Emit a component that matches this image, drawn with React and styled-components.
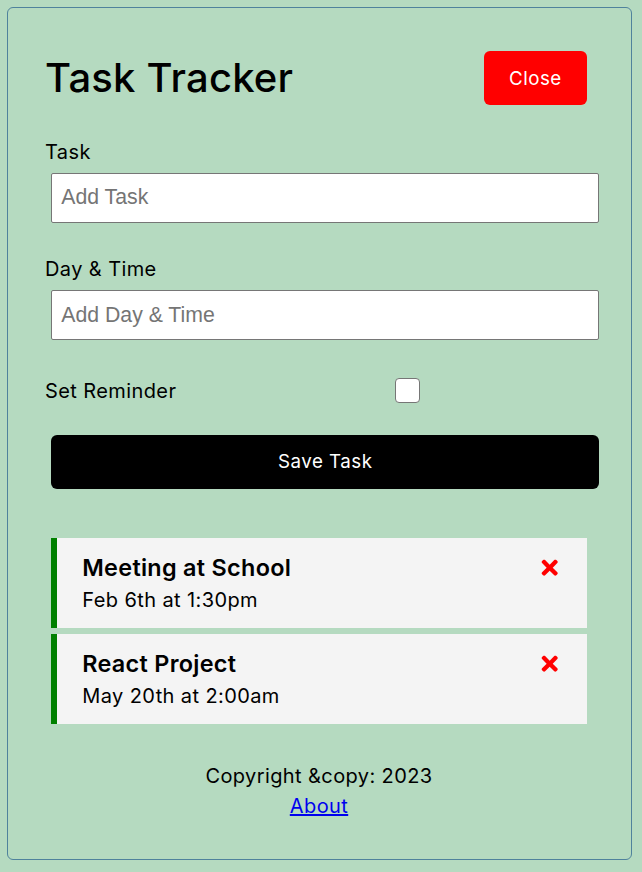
import React from 'react';
import styled, { createGlobalStyle } from 'styled-components';
import { FaTimes } from 'react-icons/fa';

const GlobalStyle = createGlobalStyle`
  * { box-sizing: border-box; margin: 0; padding: 0; }
  html, body { background: #b5dac0; }
  body {
    font-family: Inter, "Noto Sans", sans-serif;
    font-size: 20px;
    line-height: 30px;
    letter-spacing: 0.4px;
    color: #000;
  }
`;

const Container = styled.div`
  margin: 7px;
  width: 625px;
  border: 1px solid #4f829c;
  border-radius: 6px;
  padding: 37px 38px 38px 37px;
`;

const Header = styled.header`
  display: flex;
  justify-content: space-between;
  align-items: center;
  margin-bottom: 25px;
`;

const Title = styled.h1`
  font-size: 40px;
  line-height: 60px;
  font-weight: 500;
  letter-spacing: 0.2px;
`;

const Button = styled.button`
  display: ${(p) => (p.$block ? 'block' : 'inline-block')};
  width: ${(p) => (p.$block ? '100%' : 'auto')};
  background: ${(p) => p.$bg || '#000'};
  color: #fff;
  border: none;
  padding: 12.5px 25px;
  margin: 6.25px;
  border-radius: 6px;
  font-family: inherit;
  font-size: 18.75px;
  line-height: 29px;
  letter-spacing: 0.5px;
  cursor: pointer;
`;

const Form = styled.form`
  margin-bottom: 49px;
`;

const FormControl = styled.div`
  display: flow-root;
  margin: 25px 0;
`;

const CheckRow = styled.div`
  display: flex;
  align-items: center;
  justify-content: space-between;
  margin: 29px 0;
  min-height: 30px;
`;

const Label = styled.label`
  display: block;
  flex: 1;
`;

const Input = styled.input`
  display: block;
  width: 100%;
  height: 50px;
  margin: 6.25px;
  padding: 3.75px 9px;
  font-family: "Liberation Sans", Arial, sans-serif;
  font-size: 21.25px;
  letter-spacing: 0;
  border: 1px solid #767676;
  border-radius: 2px;
  background: #fff;
  &::placeholder { color: #757575; }
`;

const CheckWrap = styled.div`
  flex: 2;
  display: flex;
  justify-content: center;
  padding-right: 4px;
`;

const Checkbox = styled.input`
  appearance: none;
  width: 25px;
  height: 25px;
  margin: 0;
  background: #fff;
  border: 1px solid #767676;
  border-radius: 4px;
`;

const Task = styled.div`
  background: #f4f4f4;
  margin: 6.25px;
  padding: 12.5px 25px;
  border-left: ${(p) => (p.$reminder ? '6.25px solid green' : 'none')};
`;

const TaskTitle = styled.h3`
  display: flex;
  align-items: center;
  justify-content: space-between;
  font-size: 23.4px;
  line-height: 35px;
  font-weight: 600;
  letter-spacing: 0.3px;
  svg { color: red; cursor: pointer; }
`;

const TaskDay = styled.p`
  font-size: 20px;
  line-height: 30px;
`;

const Footer = styled.footer`
  margin-top: 37.5px;
  text-align: center;
`;

const Link = styled.a`
  color: #0000ee;
  text-decoration: underline;
`;

const tasks = [
  { id: 1, text: 'Meeting at School', day: 'Feb 6th at 1:30pm', reminder: true },
  { id: 2, text: 'React Project', day: 'May 20th at 2:00am', reminder: true },
];

export default function App() {
  return (
    <>
      <GlobalStyle />
      <Container>
        <Header>
          <Title>Task Tracker</Title>
          <Button $bg="red">Close</Button>
        </Header>
        <Form onSubmit={(e) => e.preventDefault()}>
          <FormControl>
            <Label>Task</Label>
            <Input type="text" placeholder="Add Task" />
          </FormControl>
          <FormControl>
            <Label>Day &amp; Time</Label>
            <Input type="text" placeholder="Add Day & Time" />
          </FormControl>
          <CheckRow>
            <Label>Set Reminder</Label>
            <CheckWrap>
              <Checkbox type="checkbox" />
            </CheckWrap>
          </CheckRow>
          <Button $block type="submit">Save Task</Button>
        </Form>
        <div>
          {tasks.map((t) => (
            <Task key={t.id} $reminder={t.reminder}>
              <TaskTitle>
                {t.text} <FaTimes />
              </TaskTitle>
              <TaskDay>{t.day}</TaskDay>
            </Task>
          ))}
        </div>
        <Footer>
          <p>Copyright &amp;copy: 2023</p>
          <Link href="#">About</Link>
        </Footer>
      </Container>
    </>
  );
}
